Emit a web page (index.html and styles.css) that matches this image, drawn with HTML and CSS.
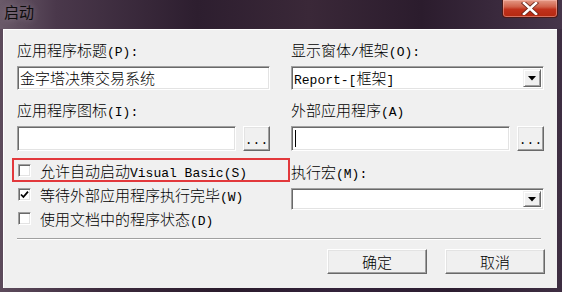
FILE: index.html
```html
<!DOCTYPE html>
<html>
<head>
<meta charset="utf-8">
<link rel="stylesheet" href="styles.css">
</head>
<body>
<div class="window">
  <div class="titlebar">
    <div class="title">启动</div>
    <div class="close">
      <svg width="18" height="13" viewBox="0 0 18 13">
        <path d="M3 1 L15 12 M15 1 L3 12" stroke="#6a2418" stroke-width="4.2" stroke-linecap="square"/>
        <path d="M3 1 L15 12 M15 1 L3 12" stroke="#ffffff" stroke-width="2.6" stroke-linecap="square"/>
      </svg>
    </div>
  </div>
  <div class="client">
    <div class="columns">
      <div class="col">
        <div class="label">应用程序标题<span class="l">(P):</span></div>
        <div class="edit field">金字塔决策交易系统</div>
        <div class="label gap-l">应用程序图标<span class="l">(I):</span></div>
        <div class="browse-row">
          <div class="edit"></div>
          <div class="btn small">...</div>
        </div>
        <div class="checks">
          <div class="check highlight"><span class="box"></span><span>允许自动启动<span class="l">Visual Basic(S)</span></span></div>
          <div class="check"><span class="box"><svg width="9" height="9" viewBox="0 0 9 9"><path d="M1 4.5 L3.4 7 L8 1.6" fill="none" stroke="#000" stroke-width="1.8"/></svg></span><span>等待外部应用程序执行完毕<span class="l">(W)</span></span></div>
          <div class="check"><span class="box"></span><span>使用文档中的程序状态<span class="l">(D)</span></span></div>
        </div>
      </div>
      <div class="col">
        <div class="label">显示窗体<span class="l">/</span>框架<span class="l">(O):</span></div>
        <div class="edit field combo"><span class="val"><span class="l">Report-[</span>框架<span class="l">]</span></span><span class="drop"><svg width="8" height="5" viewBox="0 0 8 5"><path d="M0 0 H8 L4 4.5 Z" fill="#000"/></svg></span></div>
        <div class="label gap-l">外部应用程序<span class="l">(A)</span></div>
        <div class="browse-row">
          <div class="edit"><span class="caret"></span></div>
          <div class="btn small">...</div>
        </div>
        <div class="label gap-m">执行宏<span class="l">(M):</span></div>
        <div class="edit field combo short"><span class="val"></span><span class="drop"><svg width="8" height="5" viewBox="0 0 8 5"><path d="M0 0 H8 L4 4.5 Z" fill="#000"/></svg></span></div>
      </div>
    </div>
    <div class="sep"></div>
    <div class="actions">
      <div class="btn big">确定</div>
      <div class="btn big">取消</div>
    </div>
  </div>
</div>
</body>
</html>
```
FILE: styles.css
```css
html, body {
  margin: 0;
  padding: 0;
}
body {
  width: 562px;
  height: 292px;
  overflow: hidden;
  font-family: "Noto Sans CJK SC", sans-serif;
}
.window {
  width: 562px;
  height: 292px;
  display: flex;
  flex-direction: column;
  background: linear-gradient(90deg, #5d4b5c 0%, #3c2a3d 18%, #2a1b2c 40%, #33223a 60%, #2c1d30 80%, #3e2e42 100%);
}
.titlebar {
  height: 29px;
  display: flex;
  justify-content: space-between;
  align-items: flex-start;
  background: linear-gradient(90deg, #6a5a69 0%, #4a384b 10%, #2d1e2f 35%, #3a2838 55%, #2b1c2d 75%, #46354a 100%);
}
.title {
  padding: 3px 0 0 4px;
  font-size: 15px;
  line-height: 18px;
  color: #0c0c0c;
  text-shadow: 0 0 6px rgba(230, 220, 230, 0.35);
}
.close {
  width: 54px;
  height: 17px;
  margin-right: 4px;
  border: 1px solid #4a1a18;
  border-top: none;
  border-radius: 0 0 4px 4px;
  background: linear-gradient(180deg, #e49a86 0%, #d0614a 40%, #c0321c 55%, #b32810 100%);
  box-shadow: inset 0 0 0 1px rgba(255, 200, 190, 0.45);
  display: flex;
  justify-content: center;
  align-items: center;
}
.client {
  flex: 1;
  margin: 0 5px 4px 3px;
  background: #f0f0f0;
  padding: 13px 0 0 14px;
  font-size: 15px;
  font-weight: 300;
  color: #000;
  box-shadow: inset 1px 1px 0 #ffffff;
}
.l {
  font-family: "Liberation Mono", monospace;
  font-size: 13px;
  font-weight: 400;
}
.columns {
  display: flex;
  gap: 21px;
}
.col {
  width: 253px;
  display: flex;
  flex-direction: column;
}
.label {
  height: 16px;
  line-height: 16px;
  white-space: nowrap;
}
.gap-l {
  margin-top: 12px;
}
.gap-m {
  margin-top: 13px;
}
.edit {
  box-sizing: border-box;
  background: #ffffff;
  border: 1px solid;
  border-color: #a0a0a0 #ffffff #ffffff #a0a0a0;
  box-shadow: inset 1px 1px 0 #696969, inset -1px -1px 0 #e3e3e3;
  padding: 0 0 0 2px;
  line-height: 21px;
  white-space: nowrap;
}
.field {
  height: 24px;
  margin-top: 8px;
}
.short {
  height: 22px;
}
.combo {
  display: flex;
  justify-content: space-between;
  align-items: stretch;
  padding: 2px;
  line-height: 18px;
}
.drop {
  width: 18px;
  box-sizing: border-box;
  background: #f0f0f0;
  border: 1px solid;
  border-color: #f0f0f0 #696969 #696969 #f0f0f0;
  box-shadow: inset 1px 1px 0 #ffffff, inset -1px -1px 0 #a0a0a0;
  display: flex;
  justify-content: center;
  align-items: center;
}
.browse-row {
  margin-top: 8px;
  height: 25px;
  display: flex;
  gap: 7px;
}
.browse-row .edit {
  width: 219px;
  display: flex;
  align-items: center;
}
.caret {
  display: block;
  width: 1px;
  height: 17px;
  background: #000;
  margin-left: 1px;
}
.btn {
  box-sizing: border-box;
  background: #f0f0f0;
  border: 1px solid;
  border-color: #ffffff #696969 #696969 #ffffff;
  box-shadow: inset -1px -1px 0 #a0a0a0, inset 1px 1px 0 #e3e3e3;
  display: flex;
  justify-content: center;
  align-items: center;
}
.small {
  width: 27px;
  font-family: "Liberation Mono", monospace;
  font-size: 13px;
  font-weight: 400;
  padding-top: 3px;
}
.checks {
  margin-top: 7px;
  display: flex;
  flex-direction: column;
}
.check {
  box-sizing: border-box;
  height: 24px;
  display: flex;
  align-items: center;
  gap: 9px;
  padding-left: 1px;
  white-space: nowrap;
}
.check.highlight {
  width: 278px;
  margin-left: -5px;
  padding-left: 4px;
  border: 2px solid #e2383c;
}
.box {
  box-sizing: border-box;
  width: 13px;
  height: 13px;
  background: #ffffff;
  border: 1px solid;
  border-color: #a0a0a0 #ffffff #ffffff #a0a0a0;
  box-shadow: inset 1px 1px 0 #696969, inset -1px -1px 0 #e3e3e3;
  display: flex;
  justify-content: center;
  align-items: center;
  flex: none;
}
.sep {
  margin-top: 8px;
  width: 524px;
  height: 1px;
  background: #a0a0a0;
  box-shadow: 0 1px 0 #ffffff;
}
.actions {
  margin-top: 10px;
  margin-left: 310px;
  display: flex;
  gap: 18px;
}
.big {
  width: 100px;
  height: 25px;
  font-size: 15px;
}
```
